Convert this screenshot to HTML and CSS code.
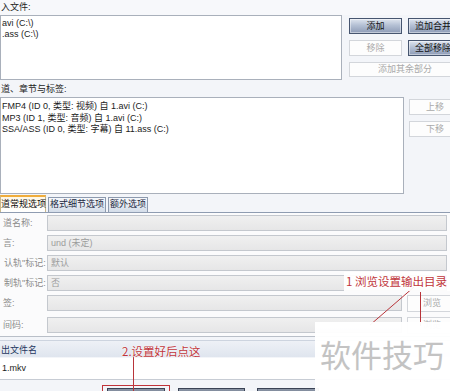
FILE: index.html
```html
<!DOCTYPE html>
<html>
<head>
<meta charset="utf-8">
<link rel="stylesheet" href="styles.css">
</head>
<body>
<div class="win">
  <div class="lbl top">入文件:</div>
  <div class="files">
    <div class="list filelist">
      <div>avi (C:\)</div>
      <div>.ass (C:\)</div>
    </div>
    <div class="fbtns">
      <div class="btn blue">添加</div>
      <div class="btn blue edge">追加合并</div>
      <div class="btn dis">移除</div>
      <div class="btn blue edge">全部移除</div>
      <div class="btn dis wide">添加其余部分</div>
    </div>
  </div>
  <div class="lbl sec">道、章节与标签:</div>
  <div class="tracks">
    <div class="list tracklist">
      <div>FMP4 (ID 0, 类型: 视频) 自 1.avi (C:)</div>
      <div>MP3 (ID 1, 类型: 音频) 自 1.avi (C:)</div>
      <div>SSA/ASS (ID 0, 类型: 字幕) 自 11.ass (C:)</div>
    </div>
    <div class="tbtns">
      <div class="btn dis side">上移</div>
      <div class="btn dis side">下移</div>
    </div>
  </div>
  <div class="tabs">
    <div class="tab active">道常规选项</div>
    <div class="tab t2">格式细节选项</div>
    <div class="tab t3">额外选项</div>
  </div>
  <div class="panel">
    <div class="row"><div class="rlbl">道名称:</div><div class="inp"></div></div>
    <div class="row"><div class="rlbl">言:</div><div class="inp">und (未定)</div></div>
    <div class="row"><div class="rlbl wide-l">认轨"标记:</div><div class="inp">默认</div></div>
    <div class="row"><div class="rlbl wide-l">制轨"标记:</div><div class="inp">否</div></div>
    <div class="row"><div class="rlbl">签:</div><div class="inp short"></div><div class="btn dis browse">浏览</div></div>
    <div class="row last"><div class="rlbl">间码:</div><div class="inp short"></div><div class="btn dis browse">浏览</div></div>
  </div>
  <div class="outband">出文件名</div>
  <div class="outfield">1.mkv</div>
  <div class="bottom">
    <div class="bbtn b1"></div>
    <div class="bbtn b2"></div>
    <div class="bbtn b3"></div>
  </div>

  <svg class="marks" width="450" height="391" viewBox="0 0 450 391">
    <line x1="414" y1="287" x2="370" y2="325" stroke="#b8343a" stroke-width="1"/>
    <line x1="420.5" y1="292" x2="420.5" y2="326" stroke="#b8343a" stroke-width="1"/>
    <line x1="133.5" y1="357" x2="133.5" y2="391" stroke="#b8343a" stroke-width="1"/>
    <rect x="102.5" y="385.5" width="67" height="12" fill="none" stroke="#c0333a" stroke-width="1"/>
  </svg>
  <div class="note n1">1 浏览设置输出目录</div>
  <div class="note n2">2.设置好后点这</div>
  <div class="wm">软件技巧</div>
</div>
</body>
</html>
```

FILE: styles.css
```css
html, body {
  margin: 0;
  padding: 0;
  background: #f3f5f9;
}
.win {
  position: relative;
  width: 450px;
  height: 391px;
  overflow: hidden;
  background: #f3f5f9;
  font-family: "Liberation Sans", "Noto Sans CJK SC", sans-serif;
  font-size: 9px;
  color: #1c1c1c;
}
.lbl {
  padding-left: 1px;
  white-space: nowrap;
}
.top {
  height: 15px;
  line-height: 14px;
  background: #f7f8fb;
}
.sec {
  height: 17px;
  line-height: 19px;
}
.files {
  display: flex;
  height: 65px;
}
.list {
  box-sizing: border-box;
  background: #fff;
  border: 1px solid #a9b0bb;
  white-space: nowrap;
  flex: none;
}
.filelist {
  width: 342px;
  height: 65px;
  padding: 2px 0 0 1px;
  line-height: 10.5px;
}
.fbtns {
  flex: none;
  margin-left: 7px;
  margin-top: 3px;
  display: grid;
  grid-template-columns: 53px 53px;
  grid-template-rows: 16px 16px 15px;
  column-gap: 6px;
  row-gap: 6px;
  align-content: start;
}
.btn {
  box-sizing: border-box;
  text-align: center;
  white-space: nowrap;
  font-size: 9px;
  line-height: 14px;
}
.btn.edge {
  text-align: left;
  padding-left: 6px;
}
.blue {
  border: 1px solid #46556f;
  background: linear-gradient(#dfe5ef 0%, #b4c0d4 45%, #8d9bb6 100%);
  box-shadow: inset 0 0 0 1px rgba(255,255,255,0.45);
  color: #111;
}
.dis {
  border: 1px solid #d3d6db;
  background: #fdfdfd;
  color: #a9a9a9;
}
.wide {
  grid-column: span 2;
  line-height: 13px;
}
.tracks {
  display: flex;
  height: 98px;
}
.tracklist {
  width: 404px;
  height: 97px;
  padding: 3px 0 0 1px;
  line-height: 11.5px;
}
.tbtns {
  flex: none;
  margin-left: 5px;
  margin-top: 2px;
  display: flex;
  flex-direction: column;
  gap: 6px;
}
.side {
  width: 51px;
  height: 16px;
  text-align: left;
  padding-left: 16px;
}
.tabs {
  display: flex;
  align-items: flex-end;
  gap: 2px;
  height: 17px;
}
.tab {
  box-sizing: border-box;
  height: 15px;
  line-height: 13px;
  text-align: center;
  font-size: 9px;
  white-space: nowrap;
  border: 1px solid #8d9aae;
  border-bottom: none;
  background: linear-gradient(#f6f8fb, #d4dde9);
  color: #1a2740;
}
.tab.active {
  width: 46px;
  height: 17px;
  line-height: 15px;
  border-color: #c9b88d;
  border-top: 2px solid #f0ad3c;
  background: linear-gradient(#fff8e6, #ffffff);
  color: #111;
  text-align: left;
}
.t2 { width: 58px; }
.t3 { width: 40px; }
.panel {
  border-top: 1px solid #8f9cb1;
  border-bottom: 1px solid #b9bfc8;
  background: #fbfbfc;
  padding: 2px 0 3px 0;
  display: flex;
  flex-direction: column;
  gap: 4px;
}
.row {
  display: flex;
  height: 16px;
}
.row.last {
  margin-top: 2px;
}
.rlbl {
  flex: none;
  width: 47px;
  padding-left: 3px;
  box-sizing: border-box;
  line-height: 16px;
  color: #8b8b8b;
  white-space: nowrap;
}
.rlbl.wide-l {
  padding-left: 4px;
}
.inp {
  flex: none;
  width: 400px;
  height: 16px;
  box-sizing: border-box;
  border: 1px solid #c4c8ce;
  background: linear-gradient(#f0f0f0, #e6e6e7);
  color: #9c9c9c;
  padding-left: 3px;
  line-height: 14px;
}
.inp.short {
  width: 355px;
}
.browse {
  flex: none;
  margin-left: 5px;
  width: 50px;
  height: 17px;
  line-height: 15px;
  text-align: left;
  padding-left: 15px;
}
.outband {
  margin-top: 3px;
  height: 17px;
  line-height: 19px;
  padding-left: 1px;
  background: linear-gradient(#eef1f6, #dfe5ee);
  border-top: 1px solid #cdd4df;
  box-sizing: border-box;
  color: #23365e;
}
.outfield {
  margin-top: 1px;
  height: 21px;
  line-height: 20px;
  padding-left: 2px;
  background: #fff;
  border-bottom: 1px solid #c7ccd4;
}
.bottom {
  display: flex;
  margin-top: 8px;
  height: 12px;
}
.bbtn {
  flex: none;
  height: 12px;
  box-sizing: border-box;
  border: 1px solid #3a4355;
  background: linear-gradient(#8b95a6, #5b6577);
}
.b1 { margin-left: 107px; width: 58px; }
.b2 { margin-left: 13px; width: 67px; }
.b3 { margin-left: 12px; width: 62px; }
.marks {
  position: absolute;
  left: 0;
  top: 0;
}
.note {
  position: absolute;
  color: #bf353b;
  font-family: "Noto Sans CJK SC", sans-serif;
  font-size: 11.5px;
  white-space: nowrap;
  text-shadow: 0 0 2px #fff, 0 0 1px #fff;
}
.n1 {
  left: 344px;
  top: 272px;
  width: 106px;
  height: 19px;
  line-height: 19px;
  padding-left: 2px;
  box-sizing: border-box;
  background: rgba(255, 255, 255, 0.92);
}
.n2 {
  left: 122px;
  top: 343px;
  line-height: 17px;
}
.wm {
  position: absolute;
  left: 315px;
  top: 322px;
  width: 135px;
  height: 69px;
  box-sizing: border-box;
  padding: 14px 0 0 5px;
  background: rgba(255, 255, 255, 0.96);
  color: #c3c3c3;
  font-family: "Noto Sans CJK SC", sans-serif;
  font-size: 31px;
  line-height: 36px;
  white-space: nowrap;
}
```
